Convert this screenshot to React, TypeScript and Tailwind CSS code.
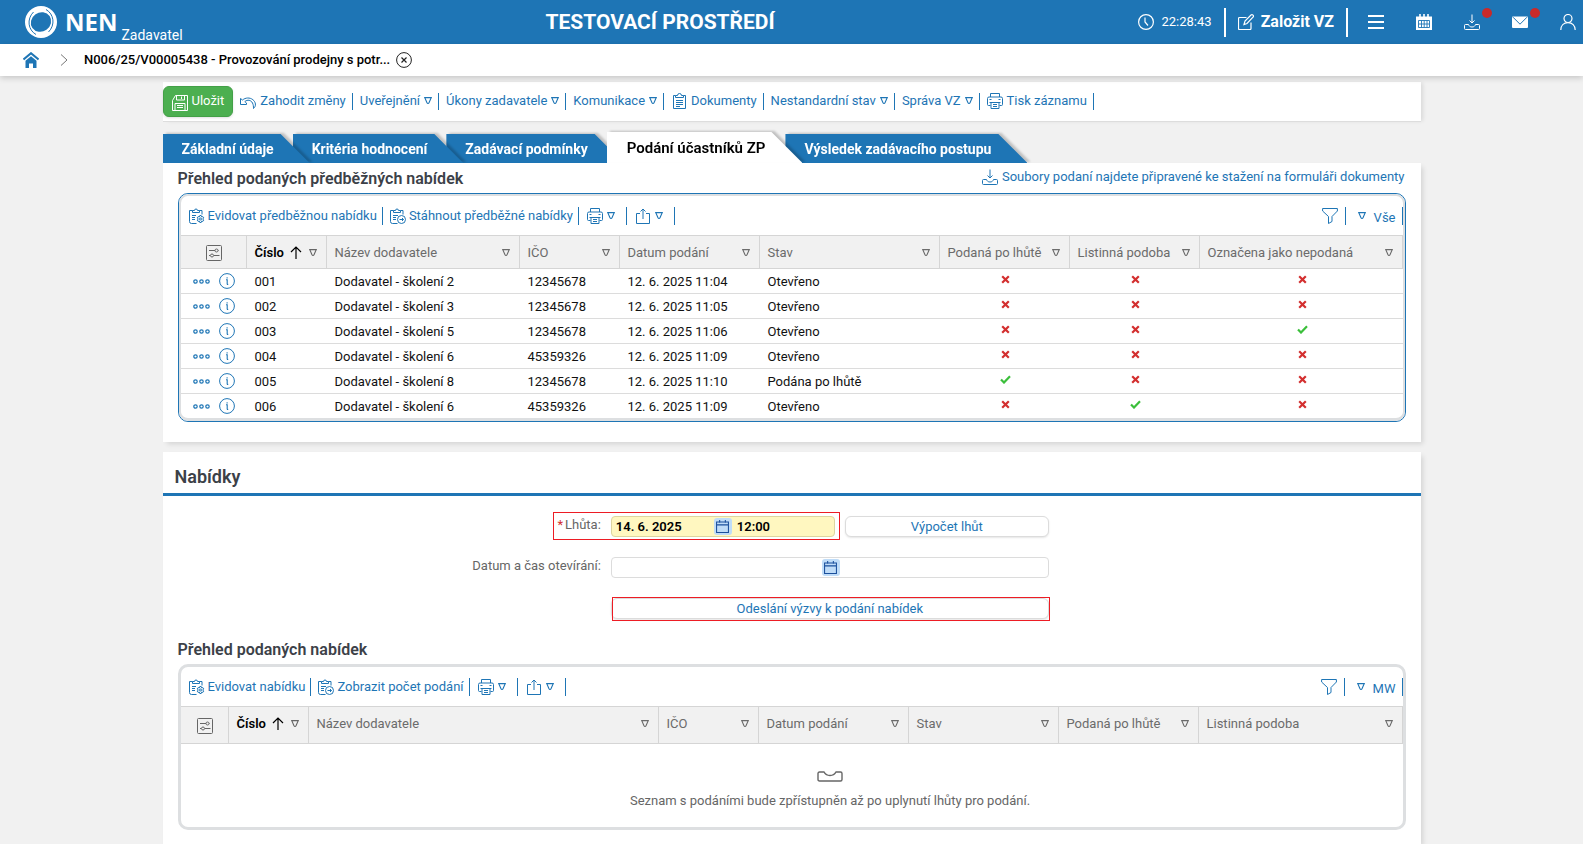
import type { ReactNode } from "react";

type IconProps = { className?: string };

function Icon({ className = "", children, size = "size-4" }: { className?: string; children: ReactNode; size?: string }) {
  return (
    <svg viewBox="0 0 16 16" fill="none" stroke="currentColor" strokeWidth="1" aria-hidden="true" className={`shrink-0 ${size} ${className}`}>
      {children}
    </svg>
  );
}

const Triangle = ({ className = "" }: IconProps) => (
  <svg viewBox="0 0 8 7" fill="none" stroke="currentColor" strokeWidth="1.1" aria-hidden="true" className={`h-[7px] w-2 shrink-0 ${className}`}>
    <path d="M.8.6h6.400L5 5.700a1.100 1.100 0 0 1-2 0z" />
  </svg>
);

const SaveIcon = () => (
  <Icon>
    <path d="M3.500.5h12v15H.5v-10zM3 15.500V8.500h10v7M4.500 .5v4.500h8V.5M9.500 1.500v2.500M5 10.500h6M5 12.500h6" />
  </Icon>
);

const UndoIcon = () => (
  <Icon>
    <path d="M.5 3.500v6h6V8L4.800 6.600C7.500 4.300 11 5 12.500 8c.9 1.900 1 3.500 1 5.500 3-2.500 2.300-6.500-.6-8.800C9.700 2.200 5.500 2.600 2.500 5z" strokeLinejoin="round" transform="translate(0 2)" />
  </Icon>
);

const DocumentsIcon = () => (
  <Icon>
    <path d="M4.500 2.500h-2v13h12v-13h-2M4.500 4.500v-2h2a2 2 0 0 1 4 0h2v2zM5 7.500h7M5 9.500h7M5 11.500h7M5 13.500h4" />
  </Icon>
);

const PrinterIcon = () => (
  <Icon>
    <path d="M3.500 4V.5h9V4M3.500 12.500h-2a1 1 0 0 1-1-1v-6q0-1.500 1.500-1.500h12q1.500 0 1.500 1.500v6a1 1 0 0 1-1 1h-2M4 9.500v6h8v-6M2.500 9.500h11M6 11.500h4M6 13.500h4M2.500 6.500h2M11.500 6.500h2" />
  </Icon>
);

const DownloadIcon = () => (
  <Icon>
    <path d="M8 .5v8.500M5.500 6.500L8 9l2.500-2.500M4.500 10.500h-3a1 1 0 0 0-1 1v3a1 1 0 0 0 1 1h13a1 1 0 0 0 1-1v-3a1 1 0 0 0-1-1h-3c-.5 1.500-1.500 2.500-3.500 2.500s-3-1-3.500-2.500z" />
  </Icon>
);

const ClipboardGearIcon = () => (
  <Icon>
    <path d="M7.500 15.500h-5a2 2 0 0 1-2-2v-11h3v2h7v-2h2.500v4M3.500 2.500h2a1.500 1.500 0 0 1 3 0h2M3 7.500h4M3 9.500h3M3 11.500h3" />
    <path d="M10.800 7.500h1.400l.4 1.400 1.300-.3.8 1.300-1 1.100 1 1.100-.8 1.300-1.300-.3-.4 1.400h-1.400l-.4-1.400-1.300.3-.8-1.300 1-1.100-1-1.100.8-1.300 1.300.3z" strokeLinejoin="round" />
    <circle cx="11.500" cy="11" r="1" />
  </Icon>
);

const ClipboardArrowIcon = () => (
  <Icon>
    <path d="M7.500 15.500h-5a2 2 0 0 1-2-2v-11h3v2h7v-2h2.500v4M3.500 2.500h2a1.500 1.500 0 0 1 3 0h2M3 7.500h5M3 9.500h3M3 11.500h3" />
    <circle cx="11.500" cy="11.500" r="4" />
    <path d="M9.500 11.500h4M12 10l1.500 1.500L12 13" />
  </Icon>
);

const ShareIcon = () => (
  <Icon>
    <path d="M5 5.500H1.500v10h13v-10H11M8 11V1M5.500 3.500L8 1l2.500 2.500" />
  </Icon>
);

const FunnelIcon = () => (
  <Icon>
    <path d="M.6.5h14.800v2.500L10 8.500v5l-3.500 2v-7L.6 3z" strokeLinejoin="round" />
  </Icon>
);

const SettingsIcon = () => (
  <Icon className="inline-block">
    <rect x=".5" y=".5" width="15" height="15" rx="1" />
    <path d="M3 5.500h6M12.500 5.500H13M3 10.500h1M8 10.500h5.500" />
    <circle cx="10.500" cy="5.500" r="1.500" />
    <circle cx="6" cy="10.500" r="1.500" />
  </Icon>
);

const CalendarIcon = () => (
  <Icon size="size-[13px]">
    <path d="M.7 2.500h14.600v12.800H.7zM.7 6h14.600M4.500 0v3.500M11.500 0v3.500" strokeWidth="1.300" />
  </Icon>
);

const InfoIcon = () => (
  <Icon>
    <circle cx="8" cy="8" r="7.400" />
    <path d="M7 6.800h1.200v4.200q0 .6 1 .4M8.100 4.300v1.200" strokeWidth="1.100" />
  </Icon>
);

const DotsIcon = () => (
  <svg viewBox="0 0 17 5" fill="none" stroke="currentColor" strokeWidth="1.200" aria-hidden="true" className="h-[5px] w-[17px]">
    <circle cx="2.500" cy="2.500" r="1.700" />
    <circle cx="8.500" cy="2.500" r="1.700" />
    <circle cx="14.500" cy="2.500" r="1.700" />
  </svg>
);

const Cross = () => (
  <svg viewBox="0 0 9 9" role="img" aria-label="Ne" className="mx-auto size-[9px] text-[#d32f2f]">
    <path d="M1.200 1.200l6.600 6.600M7.800 1.200L1.200 7.800" stroke="currentColor" strokeWidth="2.200" />
  </svg>
);

const Check = () => (
  <svg viewBox="0 0 11 9" role="img" aria-label="Ano" className="mx-auto h-[9px] w-[11px] text-[#3bbf3b]">
    <path d="M1 4.500l3 3L10 1.200" fill="none" stroke="currentColor" strokeWidth="2.200" />
  </svg>
);

const SortUp = () => (
  <svg viewBox="0 0 12 13" fill="none" stroke="currentColor" strokeWidth="1.200" aria-hidden="true" className="h-[13px] w-3 shrink-0">
    <path d="M6 13V1M1 6l5-5 5 5" />
  </svg>
);

function Header() {
  return (
    <header className="flex h-11 items-center justify-between bg-[#1e75b5] text-white">
      <a href="#" className="flex h-11 items-center pl-[25px]">
        <svg viewBox="0 0 32 32" className="size-8" aria-hidden="true">
          <circle cx="16" cy="16" r="16" fill="#fff" />
          <ellipse cx="16" cy="16" rx="10.500" ry="9.500" fill="#1e75b5" transform="rotate(-35 16 16)" />
          <path d="M11 28.500C3 24 1.500 13 8.500 6" fill="none" stroke="#1e75b5" strokeWidth="1" />
          <path d="M21 3.500c8 4.500 9.500 15.500 2.500 22.500" fill="none" stroke="#1e75b5" strokeWidth="1" />
        </svg>
        <span className="ml-2 font-['Open_Sans',sans-serif] text-[24px] leading-8 font-bold">NEN</span>
        <span className="ml-1 self-end pb-px text-[14px] leading-4">Zadavatel</span>
      </a>
      <div className="pt-0.5 text-[21px] font-bold">TESTOVACÍ PROSTŘEDÍ</div>
      <div className="flex items-center justify-end pr-[7px]">
        <Icon>
          <circle cx="8" cy="8" r="7.400" strokeWidth="1.200" />
          <path d="M7 3.500V8l3 3.500" strokeWidth="1.200" />
        </Icon>
        <time className="ml-2 text-[13px]">22:28:43</time>
        <div className="ml-3 h-[29px] w-0.5 bg-white" />
        <button type="button" className="ml-3 flex items-center gap-[7px] text-[16px] font-bold">
          <Icon>
            <path d="M8.500 3.500h-7a1 1 0 0 0-1 1v10a1 1 0 0 0 1 1h10.500a1 1 0 0 0 1-1V8.500M6 10.500l1-3.500L13 1q1-.8 2 .2t0 2L9 9.500z" strokeWidth="1.200" />
          </Icon>
          Založit VZ
        </button>
        <div className="ml-3 h-[29px] w-0.5 bg-white" />
        <div className="ml-5 flex gap-8">
          <button type="button" aria-label="Menu">
            <Icon>
              <path d="M0 2h16M0 8h16M0 14h16" strokeWidth="2" />
            </Icon>
          </button>
          <button type="button" aria-label="Kalendář">
            <Icon>
              <path d="M0 2.500h16V16H0z" fill="currentColor" stroke="none" />
              <path d="M4 0v3M8 0v3M12 0v3" strokeWidth="1.600" />
              <path d="M2.500 6.500h11v7h-11zM2.500 10h11M5.500 6.500v7M8.200 6.500v7M11 6.500v7" stroke="#1e75b5" strokeWidth=".9" />
            </Icon>
          </button>
          <button type="button" aria-label="Ke stažení" className="relative">
            <DownloadIcon />
            <span className="absolute -top-[6px] -right-3 size-2.5 rounded-full bg-[#c92a2a]" />
          </button>
          <button type="button" aria-label="Zprávy" className="relative">
            <Icon>
              <rect x="0" y="2.500" width="16" height="11.500" rx="1" fill="currentColor" stroke="none" />
              <path d="M1 3.200l7 7 7-7" stroke="#1e75b5" />
            </Icon>
            <span className="absolute -top-[6px] -right-3 size-2.5 rounded-full bg-[#c92a2a]" />
          </button>
          <button type="button" aria-label="Uživatel">
            <Icon>
              <circle cx="8" cy="4.500" r="4" strokeWidth="1.200" />
              <path d="M.8 16c0-4.500 3-7.300 7.200-7.300s7.200 2.800 7.200 7.300" strokeWidth="1.200" />
            </Icon>
          </button>
        </div>
      </div>
    </header>
  );
}

function Breadcrumb() {
  return (
    <nav className="relative z-10 flex h-8 items-center bg-white pl-[23px] shadow-[0_2px_6px_rgba(0,0,0,0.18)]">
      <a href="#" aria-label="Domů" className="text-[#1e75b5]">
        <Icon>
          <path d="M8 4.300l5.500 4.400V16H10v-4.500H6V16H2.500V8.700z" fill="currentColor" stroke="none" />
          <path d="M.5 7.500L8 1.200l7.500 6.300" strokeWidth="2" />
        </Icon>
      </a>
      <svg viewBox="0 0 8 12" className="ml-[21px] h-3 w-2 text-[#777]" fill="none" stroke="currentColor" aria-hidden="true">
        <path d="M1 .5L7 6l-6 5.500" />
      </svg>
      <a href="#" className="ml-4 text-[13px] font-medium text-black">N006/25/V00005438 - Provozování prodejny s potr...</a>
      <button type="button" aria-label="Zavřít" className="ml-1.5 text-[#222]">
        <Icon>
          <circle cx="8" cy="8" r="7.400" />
          <path d="M5.500 5.500l5 5M10.500 5.500l-5 5" strokeWidth="1.200" />
        </Icon>
      </button>
    </nav>
  );
}

type Action = { label: string; icon?: ReactNode; menu?: boolean };

const recordActions: Action[] = [
  { label: "Zahodit změny", icon: <UndoIcon /> },
  { label: "Uveřejnění", menu: true },
  { label: "Úkony zadavatele", menu: true },
  { label: "Komunikace", menu: true },
  { label: "Dokumenty", icon: <DocumentsIcon /> },
  { label: "Nestandardní stav", menu: true },
  { label: "Správa VZ", menu: true },
  { label: "Tisk záznamu", icon: <PrinterIcon /> },
];

function RecordToolbar() {
  return (
    <div className="mt-1.5 flex h-10 items-center border-b border-[#ddd] bg-white shadow-[3px_0_4px_-1px_rgba(0,0,0,0.1)]">
      <button type="button" className="flex h-[31px] items-center gap-1 rounded-md border border-[#43a047] bg-[#4caf50] px-2 pb-0.5 text-[13px] text-white shadow-sm">
        <span className="pt-1"><SaveIcon /></span>
        Uložit
      </button>
      {recordActions.map((a) => (
        <button key={a.label} type="button" className="flex h-[17px] items-center gap-1 border-r border-[#1e75b5] pr-1.5 pb-0.5 pl-[7px] text-[13px] text-[#1e75b5]">
          {a.icon}
          {a.label}
          {a.menu && <Triangle />}
        </button>
      ))}
    </div>
  );
}

const tabs = [
  { label: "Základní údaje", z: "z-[4]" },
  { label: "Kritéria hodnocení", z: "z-[3]" },
  { label: "Zadávací podmínky", z: "z-[2]" },
  { label: "Podání účastníků ZP", z: "z-[5]", active: true },
  { label: "Výsledek zadávacího postupu", z: "z-[1]" },
];

function Tabs() {
  return (
    <div role="tablist" className="mt-2.5 flex items-end">
      {tabs.map((t) => (
        <div key={t.label} className={`relative -mr-[17px] drop-shadow-[3px_-1px_1px_rgba(0,0,0,0.2)] ${t.z}`}>
          <button
            type="button"
            role="tab"
            aria-selected={!!t.active}
            className={
              t.active
                ? "block h-[31px] bg-white pt-px pr-[37px] pl-5 text-[15px] font-semibold text-black [clip-path:polygon(0_0,calc(100%-31px)_0,100%_100%,0_100%)]"
                : "block h-[29px] bg-[#1e75b5] pt-0.5 pr-9 pl-[19px] text-[14px] font-bold text-white [clip-path:polygon(0_0,calc(100%-29px)_0,100%_100%,0_100%)]"
            }
          >
            {t.label}
          </button>
        </div>
      ))}
    </div>
  );
}

function GridToolbar({ first, second, view }: { first: string; second: string; view: string }) {
  const item = "flex h-[18px] items-center gap-[3px] border-r border-[#1e75b5] pr-[5px] pl-[7px]";
  const iconItem = "flex h-[18px] items-center gap-1 border-r border-[#1e75b5] pr-[11px] pl-2";
  return (
    <div className="flex h-[39px] items-center pl-px text-[13px] text-[#1e75b5]">
      <button type="button" className={item}><ClipboardGearIcon />{first}</button>
      <button type="button" className={item}><ClipboardArrowIcon />{second}</button>
      <button type="button" aria-label="Tisk" className={iconItem}><PrinterIcon /><Triangle /></button>
      <button type="button" aria-label="Export" className={iconItem}><ShareIcon /><Triangle /></button>
      <button type="button" aria-label="Filtr" className="ml-auto flex h-[18px] items-center border-r border-[#1e75b5] pr-[7px]"><FunnelIcon /></button>
      <button type="button" className="flex h-[18px] items-center gap-2 border-r border-[#1e75b5] pr-1.5 pl-3"><Triangle /><span className="pt-1">{view}</span></button>
    </div>
  );
}

type Column = { label: string; width: string };

function GridHead({ columns, height, content }: { columns: Column[]; height: string; content: string }) {
  const cell = "border-y border-r border-[#d5d5d5] bg-[#f1f1f1] p-0";
  return (
    <thead>
      <tr className={height}>
        <th className={`${cell} text-center text-[#666]`} aria-label="Nastavení">
          <button type="button" aria-label="Nastavení sloupců" className="block w-full pl-0.5"><SettingsIcon /></button>
        </th>
        <th className={`${cell} text-left font-semibold text-black`}>
          <div className={`flex items-center gap-1.5 pr-[9px] pl-2 ${content}`}>
            Číslo
            <SortUp />
            <Triangle className="ml-auto text-[#666]" />
          </div>
        </th>
        {columns.map((c) => (
          <th key={c.label} className={`${cell} text-left font-normal text-[#6b6b6b]`}>
            <div className={`flex items-center justify-between pr-[9px] pl-2 ${content}`}>
              {c.label}
              <Triangle />
            </div>
          </th>
        ))}
      </tr>
    </thead>
  );
}

const prelimColumns: Column[] = [
  { label: "Název dodavatele", width: "w-[193px]" },
  { label: "IČO", width: "w-[100px]" },
  { label: "Datum podání", width: "w-[140px]" },
  { label: "Stav", width: "w-[180px]" },
  { label: "Podaná po lhůtě", width: "w-[130px]" },
  { label: "Listinná podoba", width: "w-[130px]" },
  { label: "Označena jako nepodaná", width: "" },
];

const prelimRows = [
  { no: "001", name: "Dodavatel - školení 2", ico: "12345678", date: "12. 6. 2025 11:04", state: "Otevřeno", flags: [false, false, false] },
  { no: "002", name: "Dodavatel - školení 3", ico: "12345678", date: "12. 6. 2025 11:05", state: "Otevřeno", flags: [false, false, false] },
  { no: "003", name: "Dodavatel - školení 5", ico: "12345678", date: "12. 6. 2025 11:06", state: "Otevřeno", flags: [false, false, true] },
  { no: "004", name: "Dodavatel - školení 6", ico: "45359326", date: "12. 6. 2025 11:09", state: "Otevřeno", flags: [false, false, false] },
  { no: "005", name: "Dodavatel - školení 8", ico: "12345678", date: "12. 6. 2025 11:10", state: "Podána po lhůtě", flags: [true, false, false] },
  { no: "006", name: "Dodavatel - školení 6", ico: "45359326", date: "12. 6. 2025 11:09", state: "Otevřeno", flags: [false, true, false] },
];

function PreliminaryOffers() {
  return (
    <section className="relative z-10 bg-white px-[15px] pb-5 shadow-[3px_3px_5px_-1px_rgba(0,0,0,0.12)]">
      <div className="flex h-[30px] items-center justify-between">
        <h2 className="pt-0.5 text-[16px] font-semibold text-[#3c4148]">Přehled podaných předběžných nabídek</h2>
        <a href="#" className="flex items-center gap-1 pr-px pb-0.5 text-[13px] text-[#1e75b5]">
          <DownloadIcon />
          Soubory podaní najdete připravené ke stažení na formuláři dokumenty
        </a>
      </div>
      <div className="overflow-hidden rounded-[10px] border border-[#1e75b5]">
        <div className="overflow-hidden rounded-[9px] border-2 border-b-[3px] border-[#dddfe1]">
          <GridToolbar first="Evidovat předběžnou nabídku" second="Stáhnout předběžné nabídky" view="Vše" />
          <table className="w-full table-fixed border-separate border-spacing-0 text-[13px]">
            <colgroup>
              <col className="w-[66px]" />
              <col className="w-20" />
              {prelimColumns.map((c) => <col key={c.label} className={c.width} />)}
            </colgroup>
            <GridHead columns={prelimColumns} height="h-[34px]" content="pt-px" />
            <tbody className="text-[#111] [&_td]:border-b [&_td]:border-[#dcdcdc] [&_td]:p-0 [&_tr:last-child_td]:border-b-0">
              {prelimRows.map((r) => (
                <tr key={r.no} className="h-[25px] last:h-6">
                  <td>
                    <div className="flex items-center gap-[9px] pl-3 text-[#1e75b5]">
                      <button type="button" aria-label={`Akce ${r.no}`}><DotsIcon /></button>
                      <button type="button" aria-label={`Detail ${r.no}`}><InfoIcon /></button>
                    </div>
                  </td>
                  {[r.no, r.name, r.ico, r.date, r.state].map((v, i) => (
                    <td key={i} className="leading-5"><div className="pt-px pl-2">{v}</div></td>
                  ))}
                  {r.flags.map((f, i) => (
                    <td key={i}><div className="pb-[3px] pl-0.5">{f ? <Check /> : <Cross />}</div></td>
                  ))}
                </tr>
              ))}
            </tbody>
          </table>
        </div>
      </div>
    </section>
  );
}

const offerColumns: Column[] = [
  { label: "Název dodavatele", width: "w-[350px]" },
  { label: "IČO", width: "w-[100px]" },
  { label: "Datum podání", width: "w-[150px]" },
  { label: "Stav", width: "w-[150px]" },
  { label: "Podaná po lhůtě", width: "w-[140px]" },
  { label: "Listinná podoba", width: "" },
];

function CalendarButton({ label }: { label: string }) {
  return (
    <button type="button" aria-label={label} className="flex h-[17px] w-[18px] shrink-0 items-center justify-center rounded-[3px] bg-[#bfdcf8] text-[#1a4f9c]">
      <CalendarIcon />
    </button>
  );
}

function DeadlineForm() {
  const label = "pr-0.5 text-right text-[13px] leading-[18px] text-[#666]";
  const button = "h-[21px] rounded-md border border-[#dcdcdc] bg-white text-[13px] leading-[19px] text-[#1e75b5] shadow-[0_1px_2px_rgba(0,0,0,0.1)]";
  return (
    <form className="grid grid-cols-[35%_438px] gap-x-2 gap-y-5 pt-5 [&>*]:h-[21px]">
      <label htmlFor="deadline-date" className={label}><span className="mr-0.5 text-[#d32f2f]">*</span>Lhůta:</label>
      <div className="flex justify-between gap-2.5">
        <div className="relative flex w-56 items-center rounded border border-[#ddd5a0] bg-[#fff7c0] text-[13px] font-semibold">
          <input id="deadline-date" defaultValue="14. 6. 2025" className="w-[102px] pl-1 outline-none" />
          <CalendarButton label="Vybrat datum lhůty" />
          <input aria-label="Čas lhůty" defaultValue="12:00" className="min-w-0 flex-1 pl-[5px] outline-none" />
          <span className="pointer-events-none absolute -top-[5px] -right-1.5 -bottom-1 -left-[59px] border border-[#ed1c24]" />
        </div>
        <button type="button" className={`${button} w-[204px]`}>Výpočet lhůt</button>
      </div>
      <label htmlFor="opening-date" className={label}>Datum a čas otevírání:</label>
      <div className="flex items-center rounded border border-[#dcdcdc] bg-white text-[13px]">
        <input id="opening-date" className="min-w-0 flex-1 pl-1.5 outline-none" />
        <CalendarButton label="Vybrat datum otevírání" />
        <input aria-label="Čas otevírání" className="min-w-0 flex-1 pl-1 outline-none" />
      </div>
      <div className="relative col-start-2">
        <button type="button" className={`${button} block w-full`}>Odeslání výzvy k podání nabídek</button>
        <span className="pointer-events-none absolute -top-px -right-px -bottom-0.5 left-px border border-[#ed1c24]" />
      </div>
    </form>
  );
}

function Offers() {
  return (
    <section className="mt-2.5 flex-1 bg-white pb-2 shadow-[3px_3px_5px_-1px_rgba(0,0,0,0.12)]">
      <h2 className="flex h-11 items-center border-b-3 border-[#1e75b5] px-3 pt-2 text-[18px] font-semibold text-[#3c4148]">Nabídky</h2>
      <DeadlineForm />
      <div className="px-[15px] pt-4">
        <h3 className="h-[29px] text-[16px] leading-[29px] font-semibold text-[#3c4148]">Přehled podaných nabídek</h3>
        <div className="overflow-hidden rounded-[10px] border-3 border-[#dddfe1]">
          <GridToolbar first="Evidovat nabídku" second="Zobrazit počet podání" view="MW" />
          <table className="w-full table-fixed border-separate border-spacing-0 text-[13px]">
            <colgroup>
              <col className="w-12" />
              <col className="w-20" />
              {offerColumns.map((c) => <col key={c.label} className={c.width} />)}
            </colgroup>
            <GridHead columns={offerColumns} height="h-[38px]" content="pb-[3px]" />
          </table>
          <div className="flex h-[83px] flex-col items-center pl-20 text-[13px] text-[#666]">
            <div className="flex flex-col items-center pt-[27px] pr-[3px]">
              <svg viewBox="0 0 26 11" className="h-[11px] w-[26px]" fill="none" stroke="currentColor" strokeWidth="1.400" aria-hidden="true">
                <path d="M1 2.500Q1 1 2.500 1H7c1.500 2.700 3.500 3.500 6 3.500S17.500 3.700 19 1h4.500Q25 1 25 2.500v6Q25 10 23.500 10h-21Q1 10 1 8.500z" />
              </svg>
              <p className="mt-[9px] leading-5">Seznam s podáními bude zpřístupněn až po uplynutí lhůty pro podání.</p>
            </div>
          </div>
        </div>
      </div>
    </section>
  );
}

export default function App() {
  return (
    <div className="flex min-h-screen flex-col bg-[#f1f1f1] font-['Roboto',sans-serif]">
      <Header />
      <Breadcrumb />
      <main className="mx-auto flex w-full max-w-[1258px] flex-1 flex-col">
        <RecordToolbar />
        <Tabs />
        <PreliminaryOffers />
        <Offers />
      </main>
    </div>
  );
}
